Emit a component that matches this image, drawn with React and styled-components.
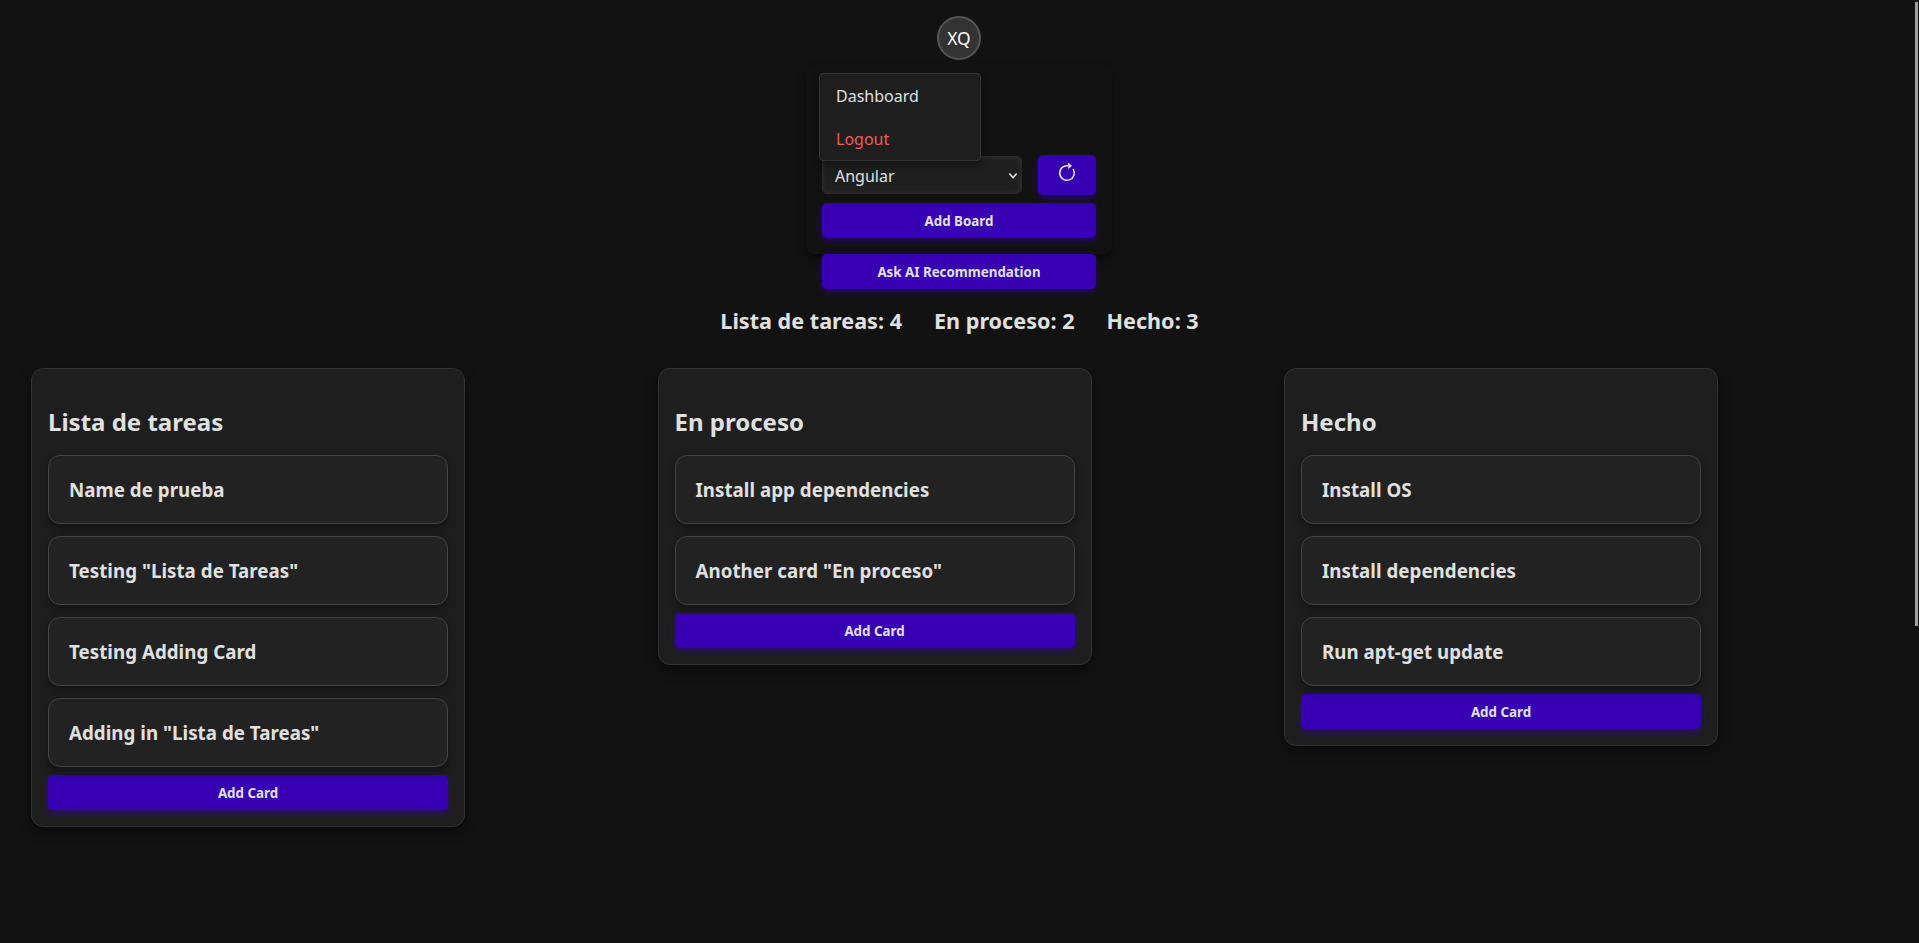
import React from "react";
import styled, { createGlobalStyle } from "styled-components";

const GlobalStyle = createGlobalStyle`
  *, *::before, *::after { box-sizing: border-box; }
  html { background: #121212; }
  body {
    margin: 0;
    height: 943px;
    overflow: hidden;
    background: #121212;
    color: #e0e0e0;
    font-family: "Noto Sans", sans-serif;
    font-size: 16px;
  }
  button, select { font-family: inherit; }
`;

const Page = styled.div`
  display: flex;
  flex-direction: column;
  height: 943px;
`;

const Header = styled.header`
  display: flex;
  flex-direction: column;
  align-items: center;
  width: 306px;
  margin: 16px auto 0 806px;
`;

const Avatar = styled.button`
  width: 44px;
  height: 44px;
  padding: 0;
  border: 2px solid #555;
  border-radius: 50%;
  background: #333;
  color: #fff;
  font-size: 17.4px;
  line-height: 22px;
`;

const Panel = styled.section`
  position: relative;
  display: flex;
  flex-direction: column;
  justify-content: flex-end;
  gap: 8px;
  width: 306px;
  height: 189px;
  margin-top: 5px;
  padding: 16px;
  border-radius: 8px;
  background: #121212;
  box-shadow: 0 4px 8px rgba(0, 0, 0, 0.5);
`;

const Menu = styled.nav`
  position: absolute;
  top: 8px;
  left: 13px;
  z-index: 2;
  display: flex;
  flex-direction: column;
  width: 162px;
  height: 88px;
  border: 1px solid #333;
  border-radius: 4px;
  background: #1e1e1e;
  box-shadow: 0 4px 8px rgba(0, 0, 0, 0.4);
`;

const MenuItem = styled.a`
  height: 43px;
  padding: 1px 16px 0;
  color: ${(p) => (p.$danger ? "#f45b57" : "#e0e0e0")};
  font-size: 16px;
  line-height: 43px;
`;

const PickerRow = styled.div`
  display: flex;
  align-items: center;
  gap: 16px;
`;

const SelectWrap = styled.div`
  position: relative;
  width: 200px;
  height: 38px;
`;

const SelectArrow = styled.svg`
  position: absolute;
  top: 16px;
  right: 4px;
  pointer-events: none;
`;

const BoardSelect = styled.select`
  appearance: none;
  display: block;
  width: 100%;
  height: 100%;
  padding: 5px 24px 3px 12px;
  border: 1px solid #2a2a2a;
  border-radius: 5px;
  outline: none;
  background-color: #1f1f1f;
  color: #e0e0e0;
  font-size: 16px;
  box-shadow: inset 0 0 6px rgba(255, 255, 255, 0.08);
`;

const Button = styled.button`
  display: block;
  width: 100%;
  height: 35px;
  padding: 1px 0 0;
  border: none;
  border-radius: 5px;
  background: #3700b3;
  color: #e0e0e0;
  font-size: 13.333px;
  font-weight: 700;
  line-height: 34px;
  box-shadow: 0 3px 6px rgba(55, 0, 179, 0.55);
`;

const RefreshButton = styled(Button)`
  display: flex;
  justify-content: center;
  width: 58px;
  height: 40px;
  padding-top: 7px;
`;

const AskWrap = styled.div`
  position: relative;
  width: 274px;
`;

const Stats = styled.div`
  display: flex;
  justify-content: center;
  gap: 32px;
  margin-top: 17px;
  font-size: 21.6px;
  font-weight: 700;
  line-height: 30px;
`;

const Board = styled.main`
  display: grid;
  grid-template-columns: repeat(3, 434px);
  column-gap: 192.5px;
  align-items: start;
  margin-top: 32px;
  padding-left: 31px;
`;

const Column = styled.section`
  padding: 36px 16px 16px;
  border: 1px solid #333;
  border-radius: 12px;
  background: #1e1e1e;
  box-shadow: 0 4px 12px rgba(0, 0, 0, 0.5);
`;

const ColumnTitle = styled.h2`
  margin: 0 0 17px;
  font-size: 24px;
  font-weight: 700;
  line-height: 33px;
`;

const CardList = styled.div`
  display: flex;
  flex-direction: column;
  gap: 12px;
  margin-bottom: 8px;
`;

const Card = styled.article`
  height: 69px;
  padding: 20px;
  border: 1px solid #444;
  border-radius: 12px;
  background: #222;
  font-size: 18.72px;
  font-weight: 700;
  letter-spacing: 0.04px;
  line-height: 27px;
  box-shadow: 0 4px 8px rgba(0, 0, 0, 0.4);
`;

const ScrollThumb = styled.div`
  position: fixed;
  top: 2px;
  right: 1px;
  width: 3px;
  height: 624px;
  background: #9f9f9f;
`;

const columns = [
  {
    title: "Lista de tareas",
    cards: [
      "Name de prueba",
      'Testing "Lista de Tareas"',
      "Testing Adding Card",
      'Adding in "Lista de Tareas"',
    ],
  },
  {
    title: "En proceso",
    cards: ["Install app dependencies", 'Another card "En proceso"'],
  },
  {
    title: "Hecho",
    cards: ["Install OS", "Install dependencies", "Run apt-get update"],
  },
];

function RefreshIcon() {
  return (
    <svg width="20" height="22" viewBox="0 0 20 22" fill="none">
      <path d="M11.5 3.8A7.3 7.3 0 1 0 16.1 6.9" stroke="#e0e0e0" strokeWidth="1.5" />
      <path d="M10.8 0.6L15 3.7L11.2 7.3L11.2 3.8Z" fill="#e0e0e0" />
    </svg>
  );
}

export default function App() {
  return (
    <Page>
      <GlobalStyle />
      <Header>
        <Avatar>XQ</Avatar>
        <Panel>
          <Menu>
            <MenuItem>Dashboard</MenuItem>
            <MenuItem $danger>Logout</MenuItem>
          </Menu>
          <PickerRow>
            <SelectWrap>
              <BoardSelect defaultValue="Angular">
                <option>Angular</option>
              </BoardSelect>
              <SelectArrow width="10" height="8" viewBox="0 0 10 8" fill="none">
                <path d="M1.3 1.5L5 5.6L8.7 1.5" stroke="#e0e0e0" strokeWidth="1.6" />
              </SelectArrow>
            </SelectWrap>
            <RefreshButton aria-label="Refresh">
              <RefreshIcon />
            </RefreshButton>
          </PickerRow>
          <Button>Add Board</Button>
        </Panel>
        <AskWrap>
          <Button>Ask AI Recommendation</Button>
        </AskWrap>
      </Header>
      <Stats>
        {columns.map((c) => (
          <span key={c.title}>
            {c.title}: {c.cards.length}
          </span>
        ))}
      </Stats>
      <Board>
        {columns.map((c) => (
          <Column key={c.title}>
            <ColumnTitle>{c.title}</ColumnTitle>
            <CardList>
              {c.cards.map((name) => (
                <Card key={name}>{name}</Card>
              ))}
            </CardList>
            <Button>Add Card</Button>
          </Column>
        ))}
      </Board>
      <ScrollThumb />
    </Page>
  );
}
